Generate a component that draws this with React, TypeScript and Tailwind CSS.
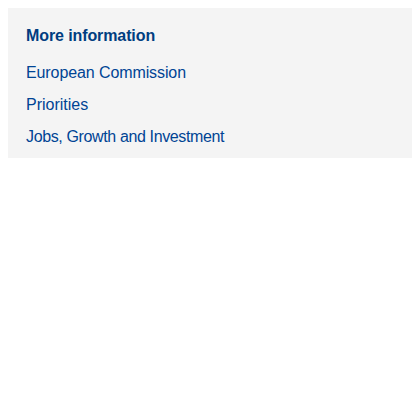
export default function App() {
  return (
    <div className="w-[420px] h-[420px] bg-white" style={{ fontFamily: '"Liberation Sans", Arial, sans-serif' }}>
      <div className="mx-2 mt-2 h-[150px] bg-[#f4f4f4] pl-[18px] pt-[18px]">
        <h2 className="text-[16px] leading-[20px] font-bold tracking-[-0.1px] text-[#003d80]">More information</h2>
        <ul className="mt-[17px] flex flex-col gap-[12px]">
          <li className="text-[16px] leading-[20px] tracking-[-0.1px] text-[#004494]">European Commission</li>
          <li className="text-[16px] leading-[20px] text-[#004494]">Priorities</li>
          <li className="text-[16px] leading-[20px] tracking-[-0.37px] text-[#004494]">Jobs, Growth and Investment</li>
        </ul>
      </div>
    </div>
  );
}
